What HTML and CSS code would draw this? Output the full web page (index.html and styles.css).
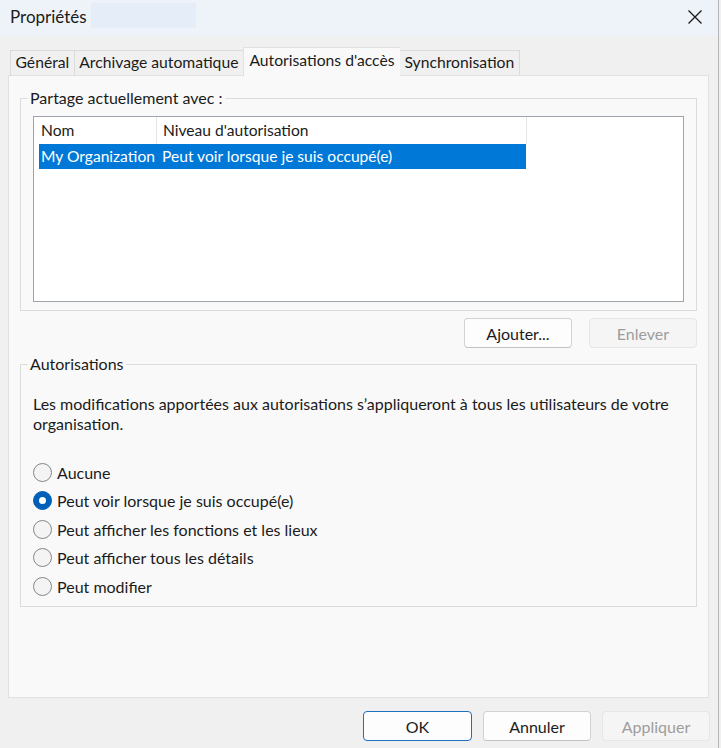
FILE: index.html
```html
<!DOCTYPE html>
<html lang="fr">
<head>
    <meta charset="UTF-8">
    <title>Propriétés</title>
    <link rel="stylesheet" href="styles.css">
</head>
<body>
    <div class="window">
        <div class="titlebar">
            <span class="title">Propriétés</span>
            <span class="title-hidden"></span>
            <span class="close">
                <svg width="16" height="16" viewBox="0 0 16 16"><path d="M1.5 1.5 L14.5 14.5 M14.5 1.5 L1.5 14.5" stroke="#1a1a1a" stroke-width="1.3" fill="none"/></svg>
            </span>
        </div>

        <div class="tabs">
            <div class="tab">Général</div>
            <div class="tab">Archivage automatique</div>
            <div class="tab active">Autorisations d'accès</div>
            <div class="tab">Synchronisation</div>
        </div>

        <div class="panel">
            <fieldset class="group">
                <legend>Partage actuellement avec :</legend>
                <div class="listview">
                    <div class="lv-head">
                        <div class="lv-col col-name">Nom</div>
                        <div class="lv-col col-level">Niveau d'autorisation</div>
                    </div>
                    <div class="lv-row selected">
                        <div class="lv-cell col-name">My Organization</div>
                        <div class="lv-cell col-level">Peut voir lorsque je suis occupé(e)</div>
                    </div>
                </div>
            </fieldset>

            <div class="btn-row">
                <button class="btn">Ajouter...</button>
                <button class="btn" disabled>Enlever</button>
            </div>

            <fieldset class="group perms">
                <legend>Autorisations</legend>
                <p class="note">Les modifications apportées aux autorisations s’appliqueront à tous les utilisateurs de votre organisation.</p>
                <div class="radios">
                    <label class="radio"><span class="dot"></span>Aucune</label>
                    <label class="radio checked"><span class="dot"></span>Peut voir lorsque je suis occupé(e)</label>
                    <label class="radio"><span class="dot"></span>Peut afficher les fonctions et les lieux</label>
                    <label class="radio"><span class="dot"></span>Peut afficher tous les détails</label>
                    <label class="radio"><span class="dot"></span>Peut modifier</label>
                </div>
            </fieldset>
        </div>

        <div class="footer">
            <button class="btn default">OK</button>
            <button class="btn">Annuler</button>
            <button class="btn" disabled>Appliquer</button>
        </div>
    </div>
</body>
</html>
```

FILE: styles.css
```css
body {
    margin: 0;
    font-family: Lato, "Noto Sans", sans-serif;
    font-size: 16px;
    color: #1b1b1b;
    background: #f0f0f0;
}
.window {
    width: 718px;
    height: 748px;
    border-right: 1px solid #b5b5b5;
    background: #f0f0f0;
    overflow: hidden;
}
.titlebar {
    height: 36px;
    display: flex;
    align-items: center;
    padding-left: 10px;
    background: #eef3f9;
}
.title {
    font-size: 17px;
    margin-top: -3px;
}
.title-hidden {
    width: 105px;
    height: 25px;
    margin-left: 4px;
    margin-top: -6px;
    background: #e5edf8;
}
.close {
    margin-left: auto;
    margin-right: 15px;
    margin-top: -3px;
    display: flex;
}

.tabs {
    display: flex;
    align-items: flex-end;
    margin-top: 12px;
    padding-left: 10px;
    height: 27px;
}
.tab {
    height: 24px;
    line-height: 23px;
    padding: 0 4.5px;
    font-size: 15.7px;
    border: 1px solid #dadada;
    border-bottom: none;
    border-right: none;
    background: #f0f0f0;
}
.tab.active {
    height: 28px;
    line-height: 25px;
    padding: 0 5.5px;
    background: #f9f9f9;
    border-color: #e0e0e0;
    margin-bottom: -1px;
    position: relative;
}
.tab.active + .tab {
    border-left: none;
}
.tab:last-child {
    border-right: 1px solid #dadada;
}

.panel {
    margin: 0 0 0 8px;
    width: 677px;
    height: 621px;
    padding: 0 11px;
    border: 1px solid #e0e0e0;
    background: #f9f9f9;
}
.group {
    margin: 12px 0 0 0;
    padding: 8px 12px 8px 12px;
    border: 1px solid #dcdcdc;
    min-width: 0;
}
.group legend {
    padding: 0 2px;
    margin-left: -5px;
    line-height: 20px;
}

.listview {
    height: 184px;
    border: 1px solid #9ea4ab;
    background: #fff;
    font-size: 15.6px;
}
.lv-head {
    display: flex;
    height: 27px;
}
.lv-col {
    line-height: 27px;
    border-right: 1px solid #e5e5e5;
}
.lv-head .col-name {
    width: 115px;
    padding-left: 7px;
}
.lv-head .col-level {
    width: 363px;
    padding-left: 6px;
}
.lv-row {
    display: flex;
    margin-left: 5px;
    width: 487px;
    height: 25px;
    line-height: 24px;
}
.lv-row.selected {
    background: #0078d7;
    color: #fff;
}
.lv-row .col-name {
    width: 115px;
    padding-left: 2px;
    white-space: nowrap;
}
.lv-row .col-level {
    padding-left: 6px;
}

.btn-row {
    display: flex;
    justify-content: flex-end;
    gap: 17px;
    margin-top: 7px;
}
.btn {
    width: 108px;
    height: 30px;
    font-family: inherit;
    font-size: 16px;
    color: #1b1b1b;
    background: #fdfdfd;
    border: 1px solid #d3d3d3;
    border-bottom-color: #c2c2c2;
    border-radius: 4px;
    padding: 0;
}
.btn:disabled {
    color: #9d9d9d;
    background: #f5f5f5;
    border-color: #e6e6e6;
}
.btn.default {
    border-color: #1f6fc0;
    width: 109px;
}

.perms {
    margin-top: 6px;
    padding-bottom: 5px;
}
.note {
    margin: 12px 0 0 0;
    line-height: 20px;
}
.radios {
    margin-top: 24px;
}
.radio {
    display: flex;
    align-items: center;
    height: 28.5px;
}
.dot {
    width: 17px;
    height: 17px;
    border: 1px solid #858585;
    border-radius: 50%;
    background: #f4f4f4;
    margin-right: 5px;
    box-sizing: content-box;
    display: flex;
    align-items: center;
    justify-content: center;
}
.radio.checked .dot {
    background: #005fb8;
    border-color: #005fb8;
}
.radio.checked .dot::after {
    content: "";
    width: 7px;
    height: 7px;
    border-radius: 50%;
    background: #fff;
}

.footer {
    display: flex;
    justify-content: flex-end;
    gap: 11px;
    margin-top: 13px;
    padding-right: 8px;
}
```
